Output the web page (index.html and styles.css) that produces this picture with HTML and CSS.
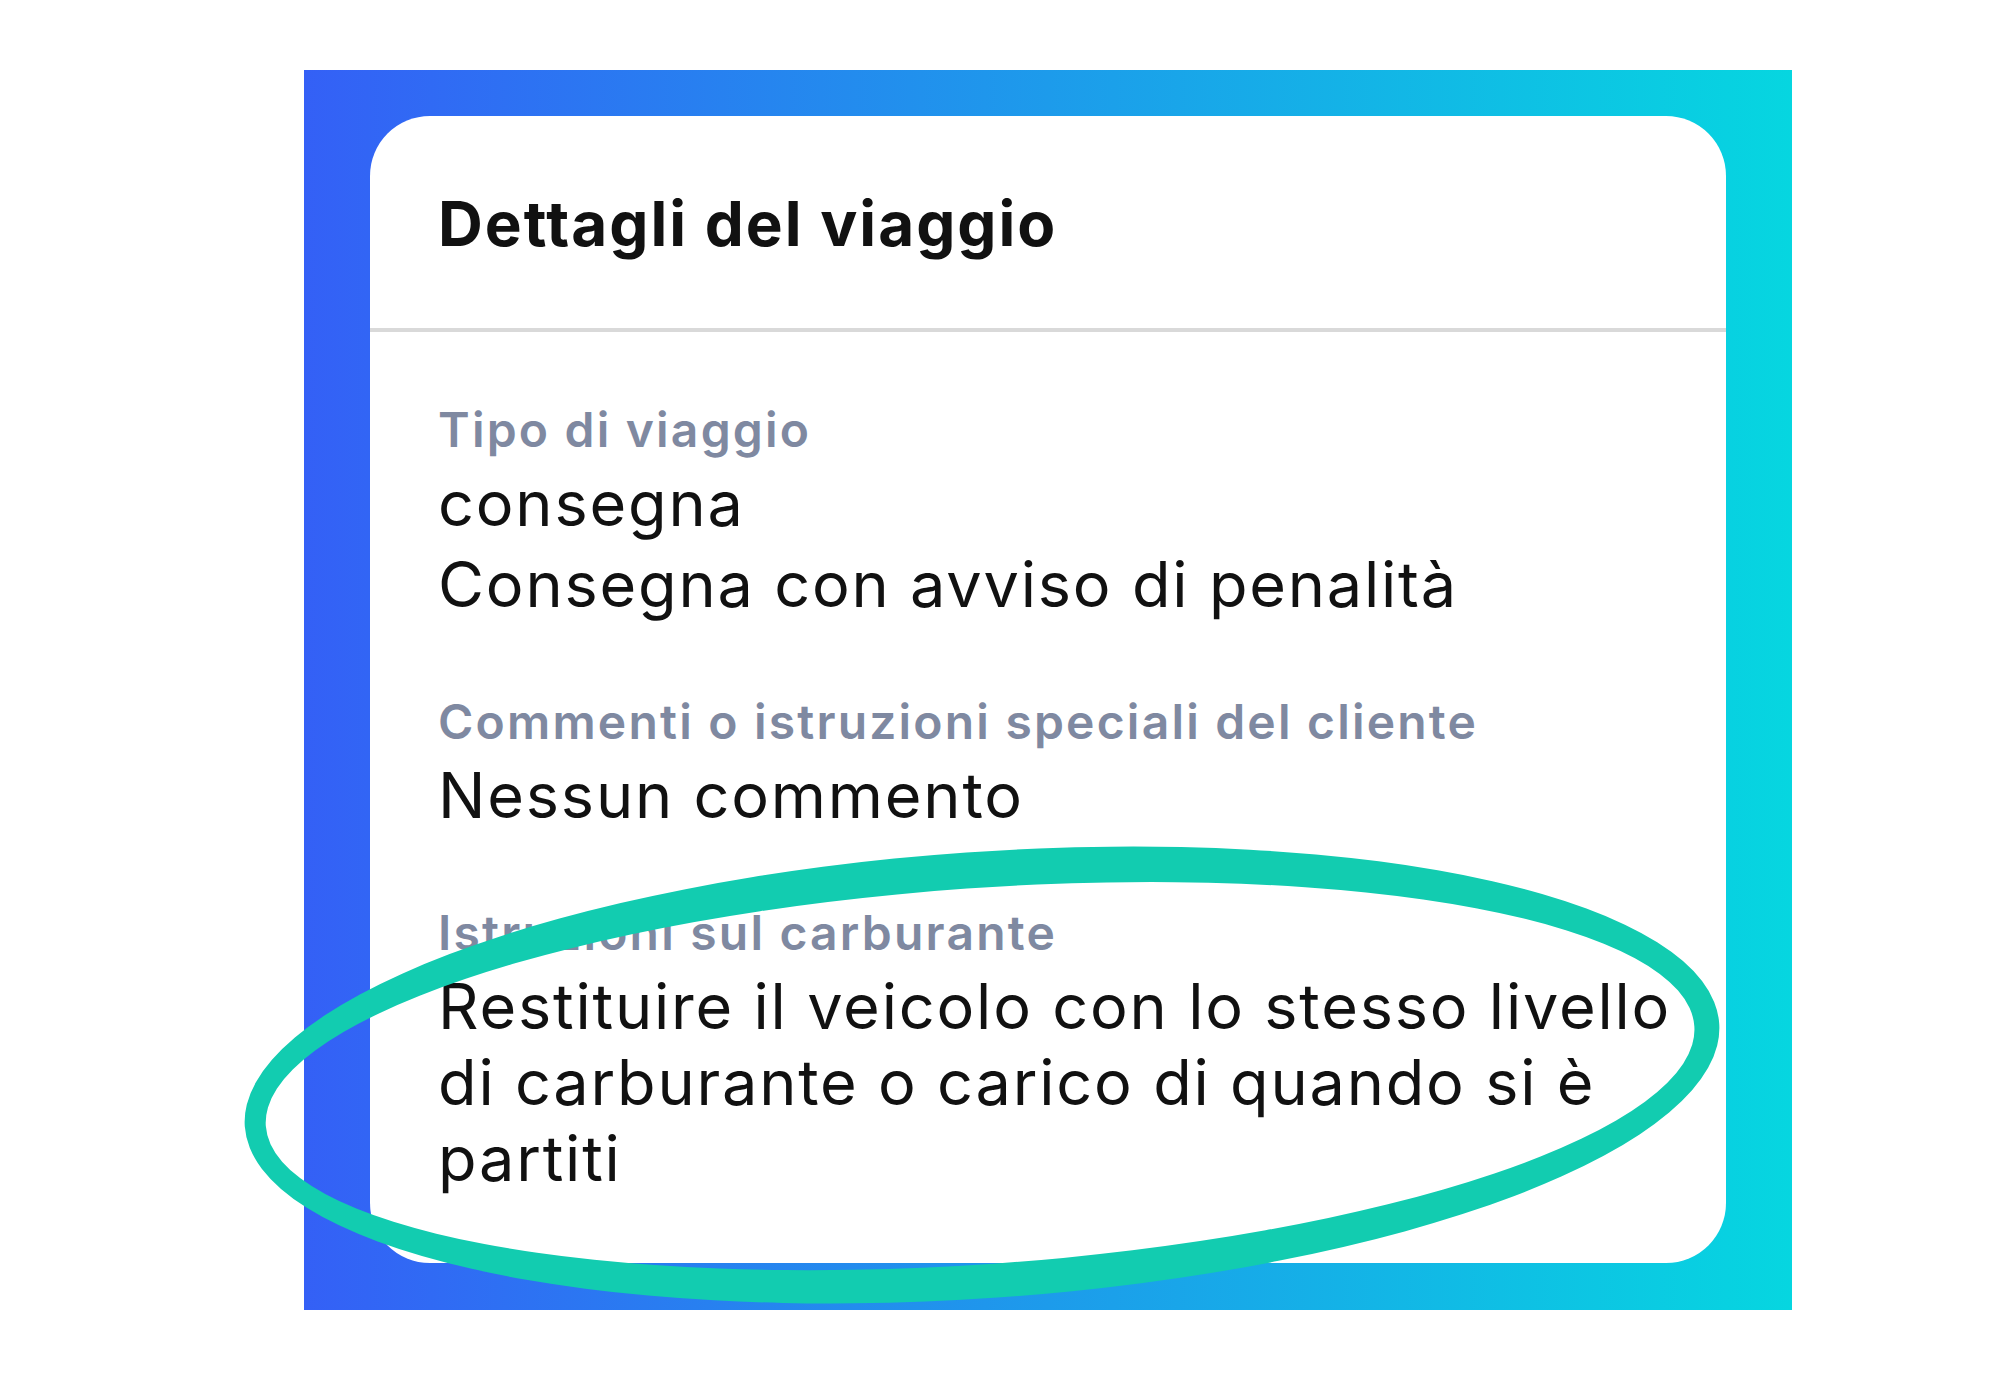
FILE: index.html
```html
<!DOCTYPE html>
<html lang="it">
<head>
    <meta charset="UTF-8">
    <meta name="viewport" content="width=device-width, initial-scale=1.0">
    <title>Dettagli del viaggio</title>
    <link rel="stylesheet" href="styles.css">
</head>
<body>
    <div class="frame">
        <div class="card">
            <div class="card-head">
                <h2>Dettagli del viaggio</h2>
            </div>
            <div class="card-body">
                <div class="field">
                    <p class="label">Tipo di viaggio</p>
                    <p class="value">consegna</p>
                    <p class="value sub">Consegna con avviso di penalità</p>
                </div>
                <div class="field">
                    <p class="label">Commenti o istruzioni speciali del cliente</p>
                    <p class="value">Nessun commento</p>
                </div>
                <div class="field">
                    <p class="label">Istruzioni sul carburante</p>
                    <p class="value">Restituire il veicolo con lo stesso livello di carburante o carico di quando si è partiti</p>
                </div>
            </div>
        </div>
    </div>

    <!-- hand drawn highlight ring -->
    <svg class="ring" width="2000" height="1400" viewBox="0 0 2000 1400">
        <g transform="rotate(-4 982 1075)">
            <path fill="#12ccb0" fill-rule="evenodd"
                d="M243 1075 a739 223 0 1 0 1478 0 a739 223 0 1 0 -1478 0 Z
                   M264 1076 a716 188 0 1 0 1432 0 a716 188 0 1 0 -1432 0 Z"/>
        </g>
    </svg>
</body>
</html>
```

FILE: styles.css
```css
:root {
    --blue: #3460f6;
    --cyan: #06d6e0;
    --text-dark: #111111;
    --text-muted: #7f89a1;
    --line: #d9d9d9;
    --white: #ffffff;
}

* {
    margin: 0;
    padding: 0;
    box-sizing: border-box;
    font-family: 'Inter', 'Noto Sans', sans-serif;
}

body {
    margin: 0;
    background: var(--white);
    position: relative;
}

.frame {
    width: 1488px;
    height: 1240px;
    margin: 70px 0 0 304px;
    padding: 46px 66px 47px 66px;
    background: linear-gradient(90deg, var(--blue) 0%, var(--cyan) 100%);
}

.card {
    height: 100%;
    background: var(--white);
    border-radius: 60px;
    overflow: hidden;
}

.card-head {
    height: 216px;
    display: flex;
    align-items: center;
    padding: 4px 68px 0;
    border-bottom: 4px solid var(--line);
}

h2 {
    font-size: 62px;
    font-weight: 700;
    line-height: 74px;
    color: var(--text-dark);
    letter-spacing: 2px;
}

.card-body {
    padding: 66px 40px 0 68px;
    display: flex;
    flex-direction: column;
    gap: 68px;
}

.label {
    font-size: 48px;
    font-weight: 600;
    line-height: 64px;
    color: var(--text-muted);
    margin-bottom: 3px;
    letter-spacing: 2.2px;
}

.value {
    font-size: 63px;
    font-weight: 400;
    line-height: 76px;
    color: var(--text-dark);
    letter-spacing: 1.8px;
}

.value.sub {
    margin-top: 5px;
}

.ring {
    position: absolute;
    top: 0;
    left: 0;
    pointer-events: none;
}
```
